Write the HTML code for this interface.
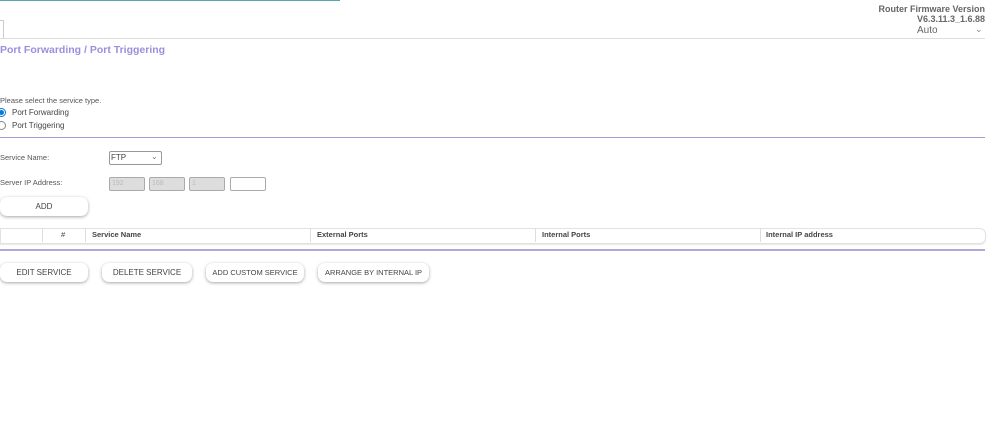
<!DOCTYPE html>
<html><head><style>
body{margin:0;width:998px;height:424px;background:#fff;font-family:"Liberation Sans",Arial,sans-serif;position:relative;overflow:hidden;color:#444}
.a{position:absolute;white-space:nowrap}
.btn{position:absolute;height:19px;border-radius:7px;background:#fff;box-shadow:0 1px 3px rgba(0,0,0,.35);font-size:8px;color:#444;text-align:center;line-height:19px}
.ip{position:absolute;top:177px;width:32px;height:12px;border:1px solid #aaa;border-radius:2px;background:#ddd;font-size:7px;color:#bbb;line-height:12px;padding-left:2px}
.th{position:absolute;top:230px;font-size:7.5px;color:#444;font-weight:bold}
.sep{position:absolute;top:228px;width:1px;height:14px;background:#ddd}
</style></head><body>
<div class="a" style="left:0;top:0;width:340px;height:1px;background:#5aa5b4"></div>
<div class="a" style="left:0;top:20px;width:3px;height:18px;border:1px solid #ccc;border-left:none;border-bottom:none"></div>
<div class="a" style="left:0;top:38px;width:985px;height:1px;background:#ddd"></div>
<div class="a" style="right:13px;top:4px;font-size:9px;font-weight:bold;color:#666;text-align:right">Router Firmware Version<br>V6.3.11.3_1.6.88</div>
<div class="a" style="left:917px;top:25px;font-size:10px;color:#666">Auto</div>
<div class="a" style="left:975px;top:24px;font-size:9px;color:#888">&#8964;</div>
<div class="a" style="left:0;top:44px;font-size:10.5px;font-weight:bold;color:#9a8fdc">Port Forwarding / Port Triggering</div>
<div class="a" style="left:0;top:96px;font-size:7.5px;color:#555">Please select the service type.</div>
<div class="a" style="left:-3px;top:108px;width:7px;height:7px;border-radius:50%;border:1px solid #0a7ad6;background:radial-gradient(#0a7ad6 45%,#fff 55%)"></div>
<div class="a" style="left:12px;top:108px;font-size:8px;color:#444">Port Forwarding</div>
<div class="a" style="left:-3px;top:121px;width:7px;height:7px;border-radius:50%;border:1px solid #888"></div>
<div class="a" style="left:12px;top:121px;font-size:8px;color:#444">Port Triggering</div>
<div class="a" style="left:0;top:137px;width:985px;height:1px;background:#a89ad8"></div>
<div class="a" style="left:0;top:153px;font-size:7.5px;color:#555">Service Name:</div>
<div class="a" style="left:109px;top:151px;width:50px;height:12px;border:1px solid #999;border-radius:2px;font-size:8px;line-height:12px;padding-left:1px">FTP<span style="position:absolute;left:41px;top:-1px;font-size:8px;color:#777">&#8964;</span></div>
<div class="a" style="left:0;top:178px;font-size:7.5px;color:#555">Server IP Address:</div>
<div class="ip" style="left:109px">192</div>
<div class="ip" style="left:149px">168</div>
<div class="ip" style="left:189px">1</div>
<div class="ip" style="left:230px;background:#fff"></div>
<div class="btn" style="left:0;top:197px;width:88px">ADD</div>
<div class="a" style="left:0;top:228px;width:984px;height:14px;border:1px solid #e2e2e2;border-radius:0 6px 6px 0;box-shadow:0 1px 1px rgba(0,0,0,.1)"></div>
<div class="sep" style="left:42px"></div><div class="sep" style="left:85px"></div><div class="sep" style="left:310px"></div><div class="sep" style="left:535px"></div><div class="sep" style="left:760px"></div>
<div class="th" style="left:61px;font-weight:normal">#</div>
<div class="th" style="left:92px">Service Name</div>
<div class="th" style="left:317px">External Ports</div>
<div class="th" style="left:542px">Internal Ports</div>
<div class="th" style="left:766px">Internal IP address</div>
<div class="a" style="left:0;top:249px;width:985px;height:2px;background:#b0a8dc"></div>
<div class="btn" style="left:0;top:263px;width:88px">EDIT SERVICE</div>
<div class="btn" style="left:102px;top:263px;width:90px">DELETE SERVICE</div>
<div class="btn" style="left:206px;top:263px;width:98px;font-size:7.5px">ADD CUSTOM SERVICE</div>
<div class="btn" style="left:318px;top:263px;width:111px;font-size:7.5px">ARRANGE BY INTERNAL IP</div>
</body></html>
